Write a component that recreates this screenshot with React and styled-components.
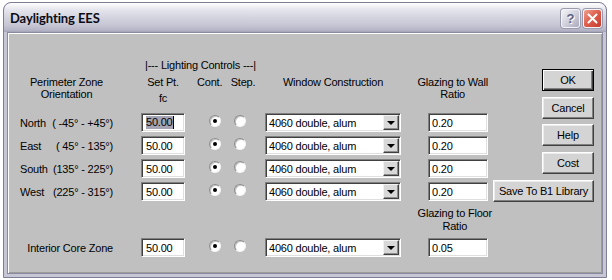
import styled, { createGlobalStyle } from "styled-components";

const GlobalStyle = createGlobalStyle`
  html, body {
    margin: 0;
    padding: 0;
    background: #ffffff;
  }
  body {
    font-family: "Liberation Sans", Arial, sans-serif;
    color: #000;
  }
`;

const COLUMNS = "121px 57px 30px 37px 163px 60px";

const Window = styled.div`
  box-sizing: border-box;
  width: 604px;
  height: 276px;
  margin: 2px 0 0 3px;
  padding: 0 3px 3px;
  display: flex;
  flex-direction: column;
  border: 1px solid #7d7d93;
  border-radius: 8px 8px 0 0;
  background: #c6c6d4;
  overflow: hidden;
`;

const TitleBar = styled.div`
  flex: 0 0 29px;
  margin: 0 -3px;
  padding: 0 4px 0 6px;
  display: flex;
  align-items: center;
  justify-content: space-between;
  border-radius: 7px 7px 0 0;
  background: linear-gradient(
    to bottom,
    #fefefe 0%,
    #e6e6ee 22%,
    #d4d4e0 50%,
    #c7c7d5 75%,
    #b4b4c6 94%,
    #a2a2b6 100%
  );
`;

const Title = styled.span`
  font-family: Lato, "Liberation Sans", Arial, sans-serif;
  font-weight: 700;
  font-size: 13px;
  letter-spacing: -0.1px;
  color: #0c0c14;
  padding-top: 1px;
`;

const Caps = styled.div`
  display: flex;
  gap: 3px;
  padding-top: 2px;
`;

const CapButton = styled.div`
  box-sizing: border-box;
  width: 19px;
  height: 19px;
  display: flex;
  align-items: center;
  justify-content: center;
  border: 1px solid #f4f4f8;
  border-radius: 3px;
  box-shadow: 0 0 0 1px #9a9aae;
  background: ${({ $danger }) =>
    $danger
      ? "linear-gradient(135deg, #f0a08f 0%, #df6150 45%, #c43a2b 100%)"
      : "linear-gradient(135deg, #f2f2f6 0%, #d2d2de 50%, #a9a9bd 100%)"};
  color: #5d6586;
  font-weight: 700;
  font-size: 13px;
  text-shadow: 1px 1px 0 #ffffff;
`;

const Client = styled.div`
  flex: 1;
  box-sizing: border-box;
  display: flex;
  justify-content: space-between;
  align-items: flex-start;
  padding: 26px 8px 0 12px;
  background: #c0c0c0;
  border: 1px solid #8a8a9e;
  box-shadow: inset 1px 1px 0 #ffffff, inset -1px -1px 0 #9c9c9c;
  font-size: 11px;
  letter-spacing: -0.2px;
`;

const Form = styled.div`
  display: flex;
  flex-direction: column;
`;

const Row = styled.div`
  display: grid;
  grid-template-columns: ${COLUMNS};
  align-items: ${({ $top }) => ($top ? "start" : "center")};
  height: ${({ $h }) => $h}px;
  margin-top: ${({ $gap }) => $gap ?? 4}px;
`;

const Caption = styled.div`
  grid-column: 2 / span 3;
  line-height: 13px;
  padding-left: 4px;
  white-space: nowrap;
`;

const Head = styled.div`
  line-height: 12px;
  text-align: center;
  white-space: nowrap;
  width: ${({ $w }) => ($w ? `${$w}px` : "auto")};
  justify-self: ${({ $justify }) => $justify || "stretch"};
  margin-left: ${({ $shift }) => $shift || 0}px;
  margin-right: ${({ $nudge }) => $nudge || 0}px;
`;

const Unit = styled.span`
  display: block;
  margin-top: 4px;
`;

const FloorHead = styled(Head)`
  grid-column: 6;
  line-height: 13px;
`;

const ZoneLabel = styled.div`
  width: 93px;
  display: flex;
  justify-content: ${({ $end }) => ($end ? "flex-end" : "space-between")};
  white-space: nowrap;
`;

const Sunken = styled.div`
  box-sizing: border-box;
  height: 19px;
  background: #ffffff;
  border: 1px solid;
  border-color: #808080 #ffffff #ffffff #808080;
  box-shadow: inset 1px 1px 0 #404040, inset -1px -1px 0 #dfdfdf;
`;

const TextBox = styled(Sunken)`
  width: ${({ $w }) => $w}px;
  padding-left: ${({ $pad }) => $pad}px;
  display: flex;
  align-items: center;
  white-space: nowrap;
`;

const Selected = styled.span`
  background: #a3a3b3;
  line-height: 13px;
`;

const Caret = styled.span`
  display: inline-block;
  width: 1px;
  height: 13px;
  background: #000;
`;

const Radio = styled.div`
  box-sizing: border-box;
  width: 12px;
  height: 12px;
  margin-left: ${({ $inset }) => $inset}px;
  margin-bottom: 4px;
  border-radius: 50%;
  background: #ffffff;
  border: 1px solid;
  border-color: #8c8c8c #f4f4f4 #f4f4f4 #8c8c8c;
  box-shadow: inset 1px 1px 0 #c4c4c4;
  display: flex;
  align-items: center;
  justify-content: center;

  &::after {
    content: "";
    width: 4px;
    height: 4px;
    border-radius: 50%;
    background: ${({ $checked }) => ($checked ? "#000" : "transparent")};
  }
`;

const Combo = styled(Sunken)`
  width: 136px;
  display: flex;
  align-items: stretch;
  padding: 1px;
`;

const ComboText = styled.span`
  flex: 1;
  padding-left: 2px;
  display: flex;
  align-items: center;
  white-space: nowrap;
`;

const ArrowButton = styled.div`
  box-sizing: border-box;
  width: 16px;
  display: flex;
  align-items: center;
  justify-content: center;
  background: #d8d8d8;
  border: 1px solid;
  border-color: #f2f2f2 #404040 #404040 #f2f2f2;
  box-shadow: inset -1px -1px 0 #8c8c8c;

  &::after {
    content: "";
    border-left: 4px solid transparent;
    border-right: 4px solid transparent;
    border-top: 4px solid #000;
    margin-top: 1px;
  }
`;

const Buttons = styled.div`
  display: flex;
  flex-direction: column;
  align-items: flex-end;
  gap: 5.7px;
  margin-top: 10px;
`;

const Button = styled.button`
  box-sizing: border-box;
  width: ${({ $w }) => $w || 52}px;
  height: 22px;
  padding: 0;
  font: inherit;
  letter-spacing: inherit;
  color: #000;
  background: #d4d4d4;
  border: 1px solid;
  border-color: ${({ $default }) =>
    $default ? "#000 #000 #000 #000" : "#ffffff #404040 #404040 #ffffff"};
  box-shadow: ${({ $default }) =>
    $default
      ? "inset 1px 1px 0 #ffffff, inset -1px -1px 0 #404040, inset -2px -2px 0 #808080"
      : "inset -1px -1px 0 #808080, inset 1px 1px 0 #ececec"};
  white-space: nowrap;
`;

const zones = [
  { name: "North", range: "( -45° - +45°)", selected: true },
  { name: "East", range: "( 45° - 135°)" },
  { name: "South", range: "(135° - 225°)" },
  { name: "West", range: "(225° - 315°)" },
];

function CloseGlyph() {
  return (
    <svg width="11" height="11" viewBox="0 0 11 11">
      <path
        d="M1.5 1.5 L9.5 9.5 M9.5 1.5 L1.5 9.5"
        stroke="#ffffff"
        strokeWidth="2"
        strokeLinecap="round"
      />
    </svg>
  );
}

function ZoneControls({ value, glazing, selected }) {
  return (
    <>
      <TextBox $w={44} $pad={4}>
        {selected ? (
          <>
            <Selected>{value}</Selected>
            <Caret />
          </>
        ) : (
          value
        )}
      </TextBox>
      <Radio $inset={11} $checked />
      <Radio $inset={6} />
      <Combo>
        <ComboText>4060 double, alum</ComboText>
        <ArrowButton />
      </Combo>
      <TextBox $w={60} $pad={3}>
        {glazing}
      </TextBox>
    </>
  );
}

export default function App() {
  return (
    <>
      <GlobalStyle />
      <Window>
        <TitleBar>
          <Title>Daylighting EES</Title>
          <Caps>
            <CapButton>?</CapButton>
            <CapButton $danger>
              <CloseGlyph />
            </CapButton>
          </Caps>
        </TitleBar>
        <Client>
          <Form>
            <Row $h={13} $gap={0}>
              <Caption>|--- Lighting Controls ---|</Caption>
            </Row>
            <Row $h={33} $top>
              <Head $w={93}>
                Perimeter Zone
                <br />
                Orientation
              </Head>
              <Head $w={44} $justify="start">
                Set Pt.
                <Unit>fc</Unit>
              </Head>
              <Head $justify="start" $shift={-1}>
                Cont.
              </Head>
              <Head $w={26} $justify="start" $shift={2}>
                Step.
              </Head>
              <Head $w={136} $justify="start">
                Window Construction
              </Head>
              <Head $justify="end">
                Glazing to Wall
                <br />
                Ratio
              </Head>
            </Row>
            {zones.map((z) => (
              <Row key={z.name} $h={19}>
                <ZoneLabel>
                  <span>{z.name}</span>
                  <span>{z.range}</span>
                </ZoneLabel>
                <ZoneControls value="50.00" glazing="0.20" selected={z.selected} />
              </Row>
            ))}
            <Row $h={29}>
              <FloorHead $justify="end" $nudge={-4}>
                Glazing to Floor
                <br />
                Ratio
              </FloorHead>
            </Row>
            <Row $h={19}>
              <ZoneLabel $end>Interior Core Zone</ZoneLabel>
              <ZoneControls value="50.00" glazing="0.05" />
            </Row>
          </Form>
          <Buttons>
            <Button $default>OK</Button>
            <Button>Cancel</Button>
            <Button>Help</Button>
            <Button>Cost</Button>
            <Button $w={101}>Save To B1 Library</Button>
          </Buttons>
        </Client>
      </Window>
    </>
  );
}
